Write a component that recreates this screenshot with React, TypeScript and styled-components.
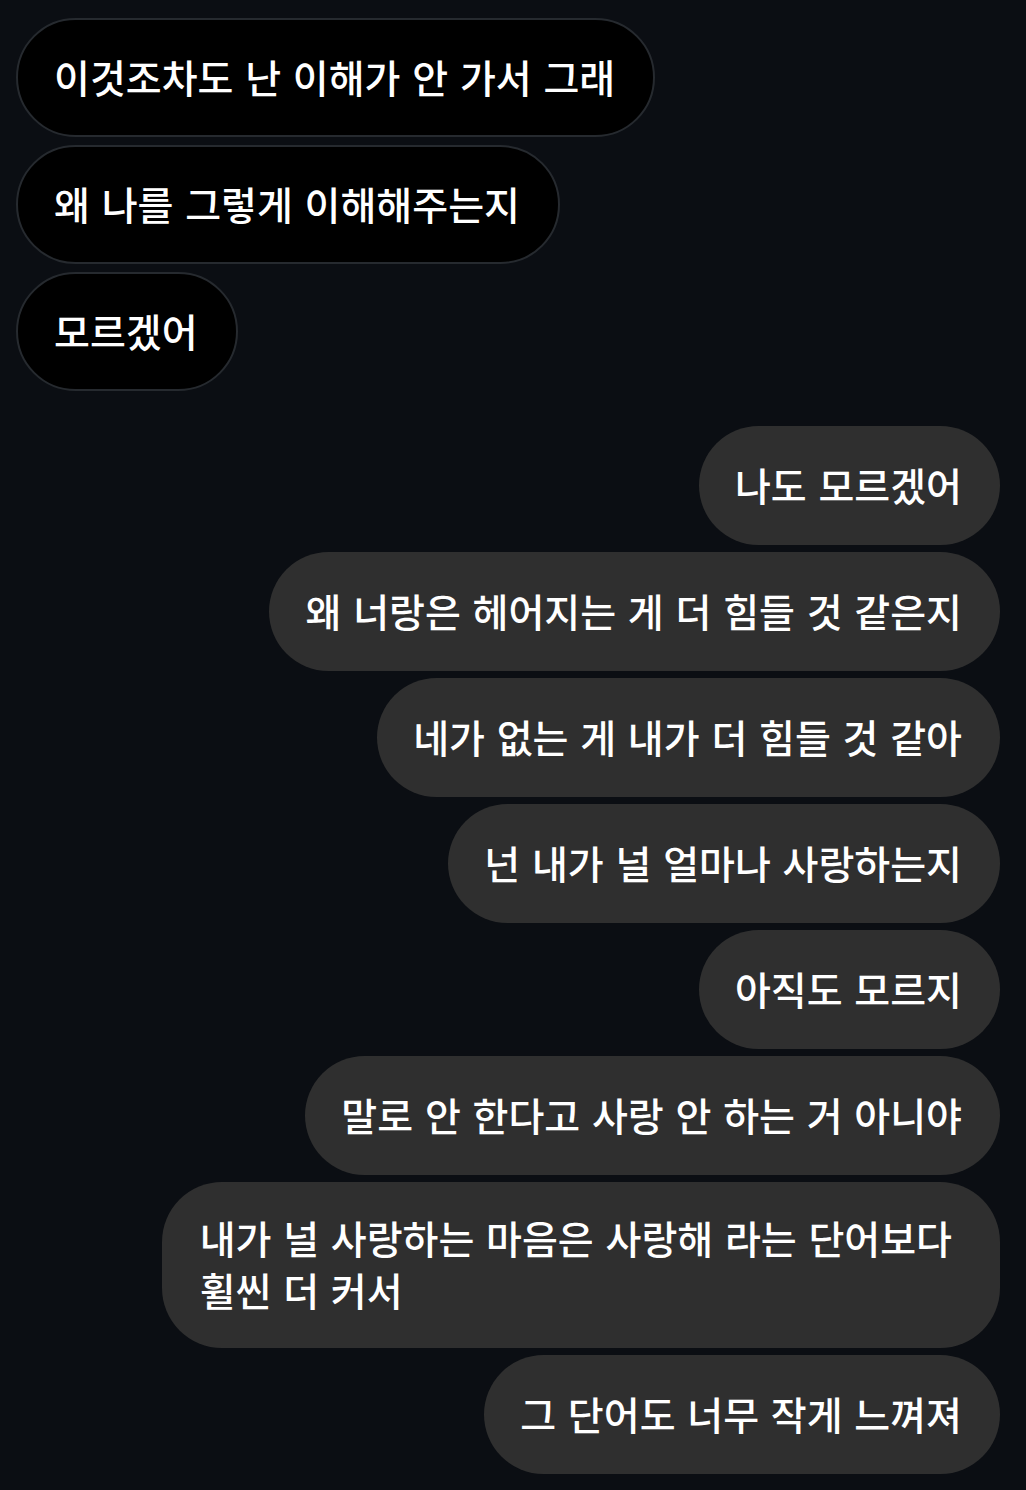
import { createGlobalStyle, styled } from "styled-components"

const GlobalStyle = createGlobalStyle`
  html, body {
    margin: 0;
    padding: 0;
    background: #0b0e13;
  }
  body {
    font-family: "Noto Sans CJK KR", "Noto Sans", sans-serif;
  }
`

const received = [
  "이것조차도 난 이해가 안 가서 그래",
  "왜 나를 그렇게 이해해주는지",
  "모르겠어",
]

const sent = [
  "나도 모르겠어",
  "왜 너랑은 헤어지는 게 더 힘들 것 같은지",
  "네가 없는 게 내가 더 힘들 것 같아",
  "넌 내가 널 얼마나 사랑하는지",
  "아직도 모르지",
  "말로 안 한다고 사랑 안 하는 거 아니야",
  "내가 널 사랑하는 마음은 사랑해 라는 단어보다\n휠씬 더 커서",
  "그 단어도 너무 작게 느껴져",
]

export default function App() {
  return (
    <>
      <GlobalStyle />
      <Chat>
        <Group $mine={false}>
          {received.map((t) => (
            <Bubble key={t} $mine={false}>{t}</Bubble>
          ))}
        </Group>
        <Group $mine>
          {sent.map((t) => (
            <Bubble key={t} $mine $wide={t.includes("\n")}>{t}</Bubble>
          ))}
        </Group>
      </Chat>
    </>
  )
}

const Chat = styled.div`
  min-height: 1490px;
  box-sizing: border-box;
  padding: 18px 26px 0 16px;
  display: flex;
  flex-direction: column;
  gap: 35px;
`

const Group = styled.div<{ $mine: boolean }>`
  display: flex;
  flex-direction: column;
  align-items: ${(p) => (p.$mine ? "flex-end" : "flex-start")};
  gap: ${(p) => (p.$mine ? "7px" : "8px")};
`

const Bubble = styled.div<{ $mine: boolean; $wide?: boolean }>`
  box-sizing: border-box;
  min-height: 119px;
  display: flex;
  align-items: center;
  padding: ${(p) => (p.$wide ? "29px 48px 33px 38px" : "29px 38px 33px 36px")};
  border-radius: 60px;
  white-space: pre-line;
  font-size: 39px;
  font-weight: 500;
  line-height: 52px;
  word-spacing: 3px;
  color: #ffffff;
  background: ${(p) => (p.$mine ? "#2f2f2f" : "#000000")};
  border: ${(p) => (p.$mine ? "none" : "2px solid #262a2f")};
`
